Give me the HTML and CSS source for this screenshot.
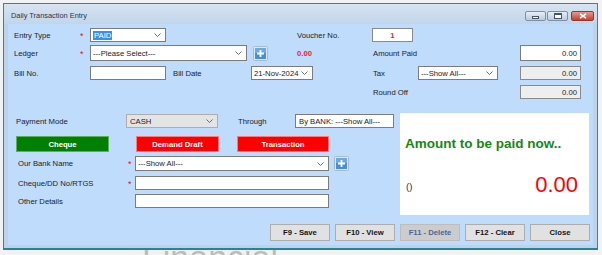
FILE: index.html
```html
<!DOCTYPE html>
<html lang="en">
<head>
  <meta charset="UTF-8">
  <title>Daily Transaction Entry</title>
  <link rel="stylesheet" href="styles.css">
</head>
<body>

  <div class="watermark"><span>Financial</span></div>

  <div class="window">
    <div class="titlebar">
      <span class="title">Daily Transaction Entry</span>
      <div class="controls">
        <span class="ctl"><span class="ico-min"></span></span>
        <span class="ctl"><span class="ico-max"></span></span>
        <span class="ctl close">
          <svg viewBox="0 0 8 6" width="8" height="6"><path d="M1 0.8 L7 5.2 M7 0.8 L1 5.2" stroke="#fff" stroke-width="1.6"/></svg>
        </span>
      </div>
    </div>

    <div class="content">
      <div class="top">
        <div class="row r1">
          <span class="lbl w66">Entry Type</span>
          <span class="ast w10">*</span>
          <div class="select w76"><span><span class="hl">PAID</span></span><svg class="chev" viewBox="0 0 7 4"><path d="M0.5 0.5 L3.5 3.5 L6.5 0.5"/></svg></div>
          <span class="lbl w75 ml131">Voucher No.</span>
          <div class="voucher">1</div>
        </div>

        <div class="row r2">
          <span class="lbl w66">Ledger</span>
          <span class="ast w10">*</span>
          <div class="select w157"><span>---Please Select---</span><svg class="chev" viewBox="0 0 7 4"><path d="M0.5 0.5 L3.5 3.5 L6.5 0.5"/></svg></div>
          <svg class="plus ml6" viewBox="0 0 15 15"><rect x="0.5" y="0.5" width="14" height="14" rx="1" fill="#dfe8f2" stroke="#a9bacd"/><rect x="2" y="2" width="11" height="11" fill="#4590dc"/><rect x="2" y="2" width="11" height="5" fill="#6aa9e8"/><path d="M7.5 4v7M4 7.5h7" stroke="#fff" stroke-width="1.8"/></svg>
          <span class="red-amt ml29 w76">0.00</span>
          <span class="lbl w147">Amount Paid</span>
          <div class="field amt w61">0.00</div>
        </div>

        <div class="row r3">
          <span class="lbl w76">Bill No.</span>
          <div class="field w76"></div>
          <span class="lbl w78 ml7">Bill Date</span>
          <div class="select w62"><span>21-Nov-2024</span><svg class="chev" viewBox="0 0 7 4"><path d="M0.5 0.5 L3.5 3.5 L6.5 0.5"/></svg></div>
          <span class="lbl w45 ml60">Tax</span>
          <div class="select w80"><span>---Show All---</span><svg class="chev" viewBox="0 0 7 4"><path d="M0.5 0.5 L3.5 3.5 L6.5 0.5"/></svg></div>
          <div class="field amt readonly w61 ml22">0.00</div>
        </div>

        <div class="row r4">
          <span class="lbl w147 ml359">Round Off</span>
          <div class="field amt readonly w61">0.00</div>
        </div>
      </div>

      <div class="lower">
        <div class="left">
          <div class="row pay-row">
            <span class="lbl w110">Payment Mode</span>
            <div class="select grey w92"><span>CASH</span><svg class="chev" viewBox="0 0 7 4"><path d="M0.5 0.5 L3.5 3.5 L6.5 0.5"/></svg></div>
            <span class="lbl w57 ml20">Through</span>
            <div class="field w99">By BANK: ---Show All---</div>
          </div>

          <div class="row btn-row">
            <button class="mode green w93">Cheque</button>
            <button class="mode red ml27 w83">Demand Draft</button>
            <button class="mode red ml18 w92">Transaction</button>
          </div>

          <div class="row bank-row">
            <span class="lbl w110">Our Bank Name</span>
            <span class="ast w7">*</span>
            <div class="select w194"><span>---Show All---</span><svg class="chev" viewBox="0 0 7 4"><path d="M0.5 0.5 L3.5 3.5 L6.5 0.5"/></svg></div>
            <svg class="plus ml5" viewBox="0 0 15 15"><rect x="0.5" y="0.5" width="14" height="14" rx="1" fill="#dfe8f2" stroke="#a9bacd"/><rect x="2" y="2" width="11" height="11" fill="#4590dc"/><rect x="2" y="2" width="11" height="5" fill="#6aa9e8"/><path d="M7.5 4v7M4 7.5h7" stroke="#fff" stroke-width="1.8"/></svg>
          </div>

          <div class="row cheque-row">
            <span class="lbl w110">Cheque/DD No/RTGS</span>
            <span class="ast w7">*</span>
            <div class="field w194"></div>
          </div>

          <div class="row other-row">
            <span class="lbl w117">Other Details</span>
            <div class="field w194"></div>
          </div>
        </div>

        <div class="panel">
          <div class="panel-title">Amount to be paid now..</div>
          <div class="panel-foot">
            <span class="paren">()</span>
            <span class="big-amt">0.00</span>
          </div>
        </div>
      </div>

      <div class="actions">
        <button class="act">F9 - Save</button>
        <button class="act">F10 - View</button>
        <button class="act disabled">F11 - Delete</button>
        <button class="act">F12 - Clear</button>
        <button class="act">Close</button>
      </div>
    </div>
  </div>

</body>
</html>
```

FILE: styles.css
```css
* {
  box-sizing: border-box;
}

body {
  margin: 0;
  height: 255px;
  overflow: hidden;
  position: relative;
  background: #f1f2f3;
  font-family: "Liberation Sans", Arial, sans-serif;
  font-size: 7.7px;
  color: #1b1b1b;
}

/* faint desktop text behind the window, only its top shows */
.watermark {
  position: absolute;
  left: 142px;
  top: 240px;
  height: 15px;
  overflow: hidden;
  font-size: 34px;
  line-height: 1;
  color: #bcbcbc;
}

/* window frame */
.window {
  position: relative;
  z-index: 1;
  margin: 3px 0 0 3px;
  width: 595px;
  height: 247px;
  border: 1px solid #66727f;
  border-bottom: 2px solid #2f7f96;
  background: #bcd3eb;
  display: flex;
  flex-direction: column;
}

.titlebar {
  height: 20px;
  flex-shrink: 0;
  display: flex;
  justify-content: space-between;
  align-items: flex-start;
  padding: 7px 3px 0 7px;
  background: linear-gradient(#d6e3f1, #c2d5ea);
}

.title {
  line-height: 10px;
  font-size: 7.4px;
  color: #1f3550;
}

.controls {
  display: flex;
  gap: 1px;
}

.ctl {
  width: 21px;
  height: 10px;
  border: 1px solid #7c8fa8;
  border-radius: 2px;
  background: linear-gradient(#e7eef6, #bccbdd);
  display: flex;
  align-items: center;
  justify-content: center;
}

.ctl.close {
  width: 23px;
  margin-left: 2px;
  border-color: #8d3a32;
  background: linear-gradient(#e59a8d, #c8402f);
}

.ico-min {
  width: 7px;
  height: 3px;
  margin-top: 2px;
  border: 1px solid #44546a;
  background: #fff;
}

.ico-max {
  width: 8px;
  height: 6px;
  border: 1px solid #44546a;
  border-top-width: 2px;
  background: #fff;
}

.content {
  flex: 1;
  margin: 0 4px 3px;
  background: #c0dcfd;
  display: flex;
  flex-direction: column;
}

/* generic rows */
.row {
  display: flex;
  align-items: center;
  height: 14px;
}

.top {
  padding-left: 6px;
}

.r1 { margin-top: 4px; }
.r2 { margin-top: 3px; height: 16px; }
.r3 { margin-top: 5px; }
.r4 { margin-top: 5px; }

.lbl {
  flex-shrink: 0;
  white-space: nowrap;
}

.ast {
  flex-shrink: 0;
  color: #e01010;
  font-size: 9px;
  line-height: 9px;
  padding-top: 2px;
}

.select,
.field {
  flex-shrink: 0;
  height: 100%;
  border: 1px solid #7c7c7c;
  background: #fff;
  white-space: nowrap;
  overflow: hidden;
}

.select {
  display: flex;
  align-items: center;
  justify-content: space-between;
  padding: 0 4px 0 2px;
}

.select.grey {
  border-color: #adadad;
  background: #e4e4e4;
  padding-left: 3px;
}

.chev {
  width: 7px;
  height: 4px;
  flex-shrink: 0;
}

.chev path {
  fill: none;
  stroke: #5c5c5c;
  stroke-width: 0.9;
}

.hl {
  background: #3394f0;
  color: #fff;
  padding: 0 1px;
}

.field {
  display: flex;
  align-items: center;
  padding: 0 3px;
}

.field.amt {
  justify-content: flex-end;
}

.field.readonly {
  background: #eeeeee;
  border-color: #8a8a8a;
}

.voucher {
  width: 41px;
  height: 100%;
  border: 1px solid #8a8a8a;
  background: #fff;
  color: #ff1a1a;
  font-weight: bold;
  display: flex;
  align-items: center;
  justify-content: center;
}

.red-amt {
  color: #f01c24;
  font-weight: bold;
}

.plus {
  width: 15px;
  height: 15px;
  flex-shrink: 0;
}

/* lower section */
.lower {
  display: flex;
  margin-top: 14px;
  height: 102px;
}

.left {
  width: 392px;
  padding-left: 8px;
}

.pay-row { margin-top: 1px; }
.btn-row { margin-top: 8px; height: 16px; }
.bank-row { margin-top: 4px; height: 15px; padding-left: 2px; }
.cheque-row { margin-top: 5px; padding-left: 2px; }
.other-row { margin-top: 4px; padding-left: 2px; }

.mode {
  height: 100%;
  flex-shrink: 0;
  font-family: inherit;
  font-size: 7.7px;
  font-weight: bold;
  color: #fff;
  padding: 0;
}

.mode.green {
  background: #007f00;
  border: 1px solid #5fae5f;
}

.mode.red {
  background: #ff0000;
  border: 1px solid #ff7a7a;
}

.panel {
  width: 189px;
  background: #fff;
  padding: 0 11px 0 5px;
  display: flex;
  flex-direction: column;
}

.panel-title {
  margin-top: 23px;
  font-size: 13.5px;
  line-height: 16px;
  font-weight: bold;
  color: #138a13;
}

.panel-foot {
  margin-top: 20px;
  display: flex;
  justify-content: space-between;
  align-items: center;
  height: 26px;
}

.paren {
  font-size: 9.5px;
  color: #1c2a4c;
  padding-left: 1px;
  padding-top: 3px;
}

.big-amt {
  font-size: 22px;
  color: #ff0000;
}

/* bottom buttons */
.actions {
  display: flex;
  justify-content: flex-end;
  gap: 5px;
  margin-top: 9px;
  padding-right: 3px;
}

.act {
  width: 60px;
  height: 17px;
  padding: 0;
  border: 1px solid #adadad;
  background: #e1e1e1;
  font-family: inherit;
  font-size: 7.7px;
  font-weight: bold;
  color: #141414;
}

.act.disabled {
  background: #cccccc;
  border-color: #bdbdbd;
  color: #4c6597;
}

/* widths and offsets */
.w7 { width: 7px; }
.w10 { width: 10px; }
.w45 { width: 45px; }
.w57 { width: 57px; }
.w61 { width: 61px; }
.w62 { width: 62px; }
.w66 { width: 66px; }
.w75 { width: 75px; }
.w76 { width: 76px; }
.w78 { width: 78px; }
.w80 { width: 80px; }
.w83 { width: 83px; }
.w92 { width: 92px; }
.w93 { width: 93px; }
.w99 { width: 99px; }
.w110 { width: 110px; }
.w117 { width: 117px; }
.w147 { width: 147px; }
.w157 { width: 157px; }
.w194 { width: 194px; }

.ml5 { margin-left: 5px; }
.ml6 { margin-left: 6px; }
.ml7 { margin-left: 7px; }
.ml18 { margin-left: 18px; }
.ml20 { margin-left: 20px; }
.ml22 { margin-left: 22px; }
.ml27 { margin-left: 27px; }
.ml29 { margin-left: 29px; }
.ml60 { margin-left: 60px; }
.ml131 { margin-left: 131px; }
.ml359 { margin-left: 359px; }
```
